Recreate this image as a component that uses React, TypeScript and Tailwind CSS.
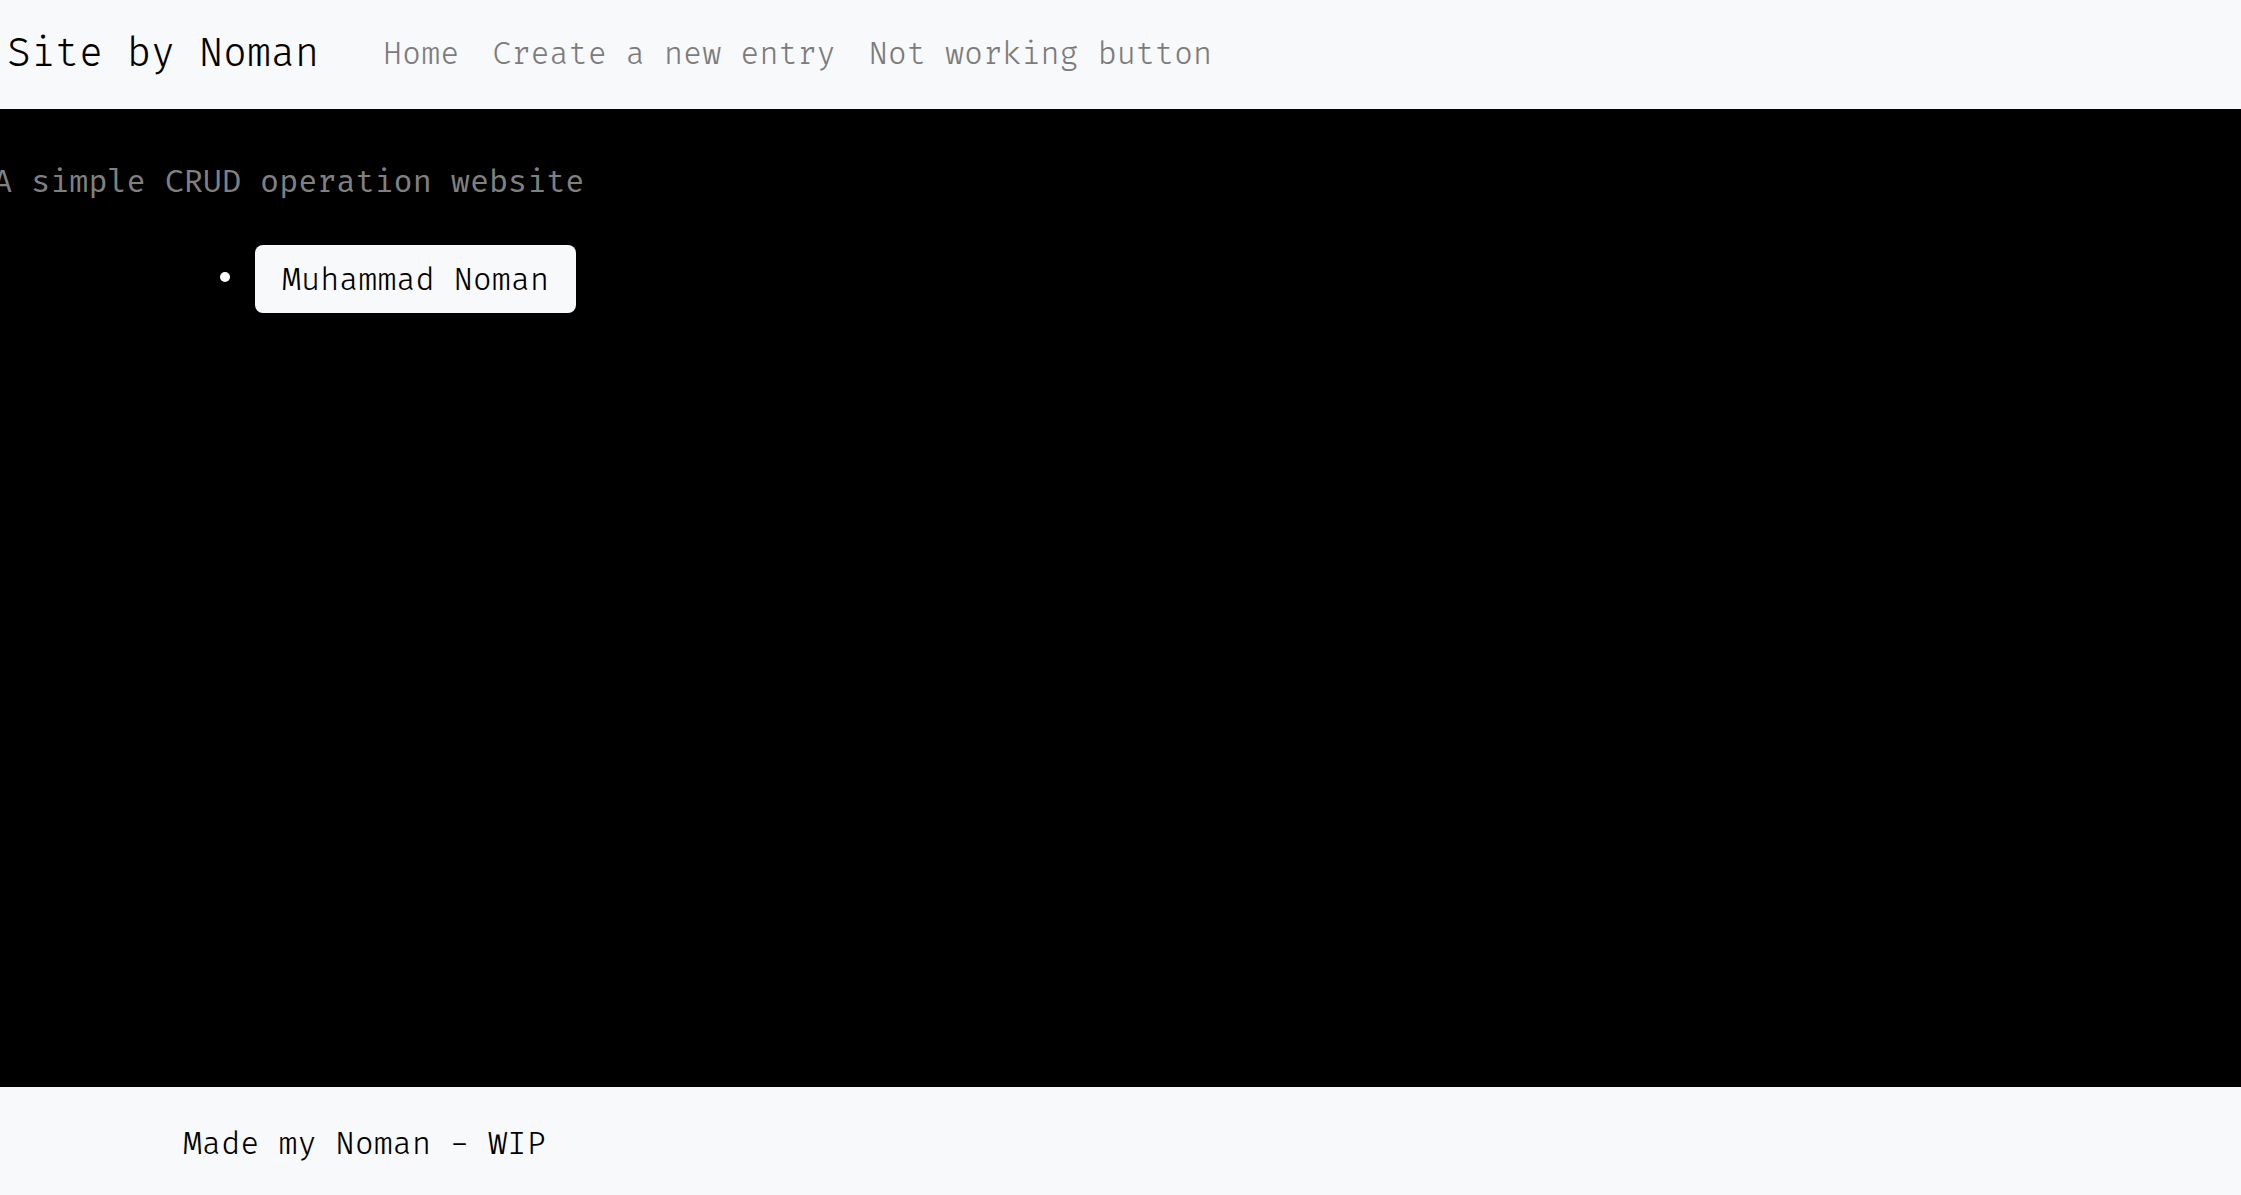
const navLinks = ["Home", "Create a new entry", "Not working button"];
const entries = ["Muhammad Noman"];

export default function App() {
  return (
    <div className="flex min-h-screen flex-col overflow-x-hidden bg-black font-['Fira_Code','Liberation_Mono',monospace] text-[31px] leading-[48px] font-light text-black">
      <nav className="flex items-center gap-16 bg-[#f8f9fa] py-6 pl-[7px]">
        <a href="#" className="text-[39px] leading-[61px] whitespace-nowrap">
          Site by Noman
        </a>
        <ul className="flex gap-[33px] text-[#7c7c7d]">
          {navLinks.map((label) => (
            <li key={label}>
              <a href="#" className="whitespace-nowrap">
                {label}
              </a>
            </li>
          ))}
        </ul>
      </nav>

      <main className="flex-1 pt-[50px]">
        <h1 className="-ml-[7px] font-normal whitespace-nowrap text-[#808080]">
          A simple CRUD operation website
        </h1>
        <ul className="mt-[38px] pl-[220px]">
          {entries.map((name) => (
            <li key={name} className="flex items-center gap-[25px]">
              <span className="mb-1 size-[10px] rounded-full bg-white" />
              <button
                type="button"
                className="rounded-lg bg-[#f8f9fa] px-[27px] pt-3 pb-2 whitespace-nowrap"
              >
                {name}
              </button>
            </li>
          ))}
        </ul>
      </main>

      <footer className="bg-[#f8f9fa] pt-[34px] pb-[26px] pl-[183px]">
        <p>Made my Noman - WIP</p>
      </footer>
    </div>
  );
}
